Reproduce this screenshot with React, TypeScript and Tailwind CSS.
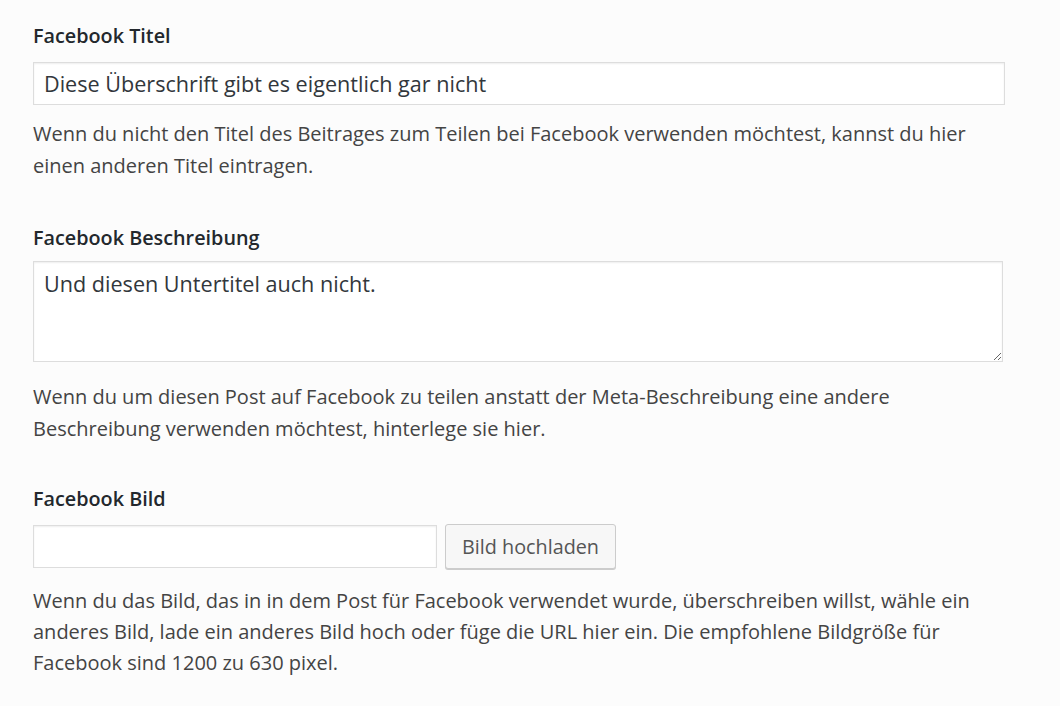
import React from 'react';

const font = "font-['Open_Sans','Noto_Sans',sans-serif]";

const Label: React.FC<{ children: React.ReactNode }> = ({ children }) => (
  <label className="block text-[19.8px] leading-[24px] font-semibold text-[#23282d]">{children}</label>
);

const Help: React.FC<{ lines: string[]; leading?: string }> = ({ lines, leading = 'leading-[32px]' }) => (
  <p className={`text-[20px] ${leading} text-[#444] whitespace-nowrap`}>
    {lines.map((l, i) => (
      <span key={i} className="block">{l}</span>
    ))}
  </p>
);

const App: React.FC = () => {
  return (
    <div className={`${font} w-[1060px] h-[706px] bg-[#fcfcfc] pl-[33px] pt-[24px] overflow-hidden`}>
      <Label>Facebook Titel</Label>
      <input
        type="text"
        readOnly
        value="Diese Überschrift gibt es eigentlich gar nicht"
        className="mt-[14px] block w-[972px] h-[43px] bg-white border border-[#ddd] shadow-[inset_0_1px_2px_rgba(0,0,0,0.07)] px-[10px] text-[21.6px] text-[#32373c] outline-none"
      />
      <div className="mt-[13px]">
        <Help
          lines={[
            'Wenn du nicht den Titel des Beitrages zum Teilen bei Facebook verwenden möchtest, kannst du hier',
            'einen anderen Titel eintragen.',
          ]}
        />
      </div>

      <div className="mt-[44px]">
        <Label>Facebook Beschreibung</Label>
      </div>
      <textarea
        readOnly
        value="Und diesen Untertitel auch nicht."
        className="mt-[11px] block w-[970px] h-[101px] bg-white border border-[#ddd] shadow-[inset_0_1px_2px_rgba(0,0,0,0.07)] px-[10px] py-[9px] text-[21.6px] leading-[26px] text-[#32373c] outline-none resize"
      />
      <div className="mt-[19px]">
        <Help
          lines={[
            'Wenn du um diesen Post auf Facebook zu teilen anstatt der Meta-Beschreibung eine andere',
            'Beschreibung verwenden möchtest, hinterlege sie hier.',
          ]}
        />
      </div>

      <div className="mt-[42px]">
        <Label>Facebook Bild</Label>
      </div>
      <div className="mt-[13px] flex items-center gap-[8px]">
        <input
          type="text"
          readOnly
          value=""
          className="block w-[404px] h-[43px] bg-white border border-[#ddd] shadow-[inset_0_1px_2px_rgba(0,0,0,0.07)] px-[10px] text-[21px] outline-none"
        />
        <button className="h-[45px] w-[171px] rounded-[3px] border border-[#ccc] bg-[#f7f7f7] shadow-[0_1px_0_#ccc] text-[19.8px] text-[#555]">
          Bild hochladen
        </button>
      </div>
      <div className="mt-[16px]">
        <Help
          leading="leading-[31px]"
          lines={[
            'Wenn du das Bild, das in in dem Post für Facebook verwendet wurde, überschreiben willst, wähle ein',
            'anderes Bild, lade ein anderes Bild hoch oder füge die URL hier ein. Die empfohlene Bildgröße für',
            'Facebook sind 1200 zu 630 pixel.',
          ]}
        />
      </div>
    </div>
  );
};

export default App;
